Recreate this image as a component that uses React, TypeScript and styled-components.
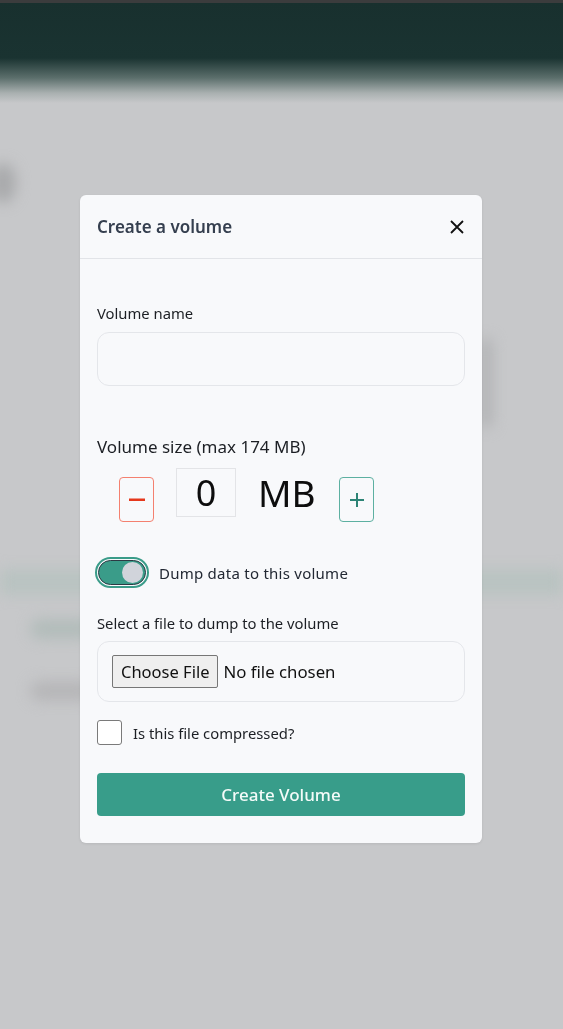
import React from "react";
import styled, { createGlobalStyle } from "styled-components";

const Global = createGlobalStyle`
  html, body { margin: 0; padding: 0; }
  body {
    background: #c7c8ca;
    font-family: "Noto Sans", "Open Sans", sans-serif;
    overflow: hidden;
  }
  * { box-sizing: border-box; }
`;

const Page = styled.div`
  min-height: 100vh;
  background: #c7c8ca;
  position: relative;
  overflow: hidden;
`;

const TopStrip = styled.div`
  height: 3px;
  background: #3b3c3d;
`;

const Header = styled.div`
  height: 100px;
  background: linear-gradient(
    to bottom,
    #18302e 0px,
    #1a3331 55px,
    #5c6f6c 75px,
    #a9b0b0 90px,
    #c7c8ca 100px
  );
`;

const Blurred = styled.div`
  filter: blur(7px);
  display: flex;
  flex-direction: column;
`;

const LeftBlob = styled.div`
  width: 26px;
  height: 40px;
  margin: 60px 0 0 -10px;
  border-radius: 50%;
  background: #a9aaac;
`;

const CardShadowRow = styled.div`
  display: flex;
  justify-content: flex-end;
  margin-top: 135px;
  padding-right: 70px;
`;

const CardEdge = styled.div`
  width: 14px;
  height: 90px;
  background: #b3b4b6;
  border-radius: 10px;
`;

const Band = styled.div`
  margin-top: 141px;
  height: 26px;
  background: #b9c3c1;
`;

const FakeRow = styled.div<{ $mt: number }>`
  display: flex;
  padding-left: 30px;
  margin-top: ${(p) => p.$mt}px;
`;

const Pill = styled.div<{ $c: string }>`
  width: 64px;
  height: 20px;
  border-radius: 10px;
  background: ${(p) => p.$c};
`;

const Overlay = styled.div`
  position: fixed;
  inset: 0;
  display: flex;
  justify-content: center;
  align-items: flex-start;
  padding-top: 195px;
  padding-right: 1px;
`;

const Modal = styled.div`
  width: 402px;
  background: #f8f9fb;
  border-radius: 6px;
  box-shadow: 0 1px 3px rgba(0, 0, 0, 0.08);
  overflow: hidden;
`;

const ModalHeader = styled.div`
  height: 64px;
  display: flex;
  align-items: center;
  justify-content: space-between;
  padding: 0 17px;
  border-bottom: 1px solid #e2e4e8;
`;

const Title = styled.h2`
  margin: 0;
  font-size: 17px;
  font-weight: 600;
  color: #353f4f;
`;

const CloseBtn = styled.button`
  border: none;
  background: none;
  padding: 0;
  width: 16px;
  height: 16px;
  display: flex;
  align-items: center;
  justify-content: center;
  cursor: pointer;
`;

const Body = styled.div`
  padding: 44px 17px 27px;
  display: flex;
  flex-direction: column;
`;

const Label = styled.label`
  font-size: 14.8px;
  color: #1c1f24;
  line-height: 20px;
`;

const TextInput = styled.input`
  margin-top: 9px;
  height: 54px;
  width: 100%;
  border: 1px solid #e4e6ea;
  border-radius: 12px;
  background: #f8f9fb;
  outline: none;
`;

const SizeLabel = styled.div`
  margin-top: 50px;
  font-size: 17px;
  color: #1c1f24;
  line-height: 22px;
`;

const SizeRow = styled.div`
  display: flex;
  align-items: flex-start;
  margin-top: 10px;
  padding-left: 22px;
`;

const StepBtn = styled.button<{ $kind: "minus" | "plus" }>`
  margin-top: 9px;
  width: 35px;
  height: 45px;
  border-radius: 4px;
  background: transparent;
  border: 1px solid ${(p) => (p.$kind === "minus" ? "#f4806f" : "#5db0a1")};
  display: flex;
  align-items: center;
  justify-content: center;
  padding: 0;
`;

const NumberBox = styled.div`
  margin-left: 22px;
  width: 60px;
  height: 49px;
  border: 1px solid #e3e4e7;
  display: flex;
  align-items: center;
  justify-content: center;
  font-size: 36px;
  color: #0d0d0d;
  font-family: "Noto Sans", sans-serif;
`;

const Unit = styled.div`
  margin-left: 22px;
  width: 61px;
  height: 49px;
  display: flex;
  align-items: center;
  font-size: 37px;
  color: #0d0d0d;
  font-family: "Noto Sans", sans-serif;
  margin-right: 20px;
`;

const ToggleRow = styled.div`
  margin-top: 35px;
  margin-left: -2px;
  display: flex;
  align-items: center;
  gap: 10px;
`;

const Toggle = styled.div`
  width: 54px;
  height: 31px;
  border-radius: 16px;
  border: 2px solid #3a9c89;
  padding: 1px;
  background: #f8f9fb;
`;

const Track = styled.div`
  width: 100%;
  height: 100%;
  border-radius: 13px;
  background: #3a9c89;
  border: 1.5px solid #2c3a44;
  display: flex;
  align-items: center;
  justify-content: flex-end;
  padding-right: 2px;
`;

const Thumb = styled.div`
  width: 21px;
  height: 21px;
  border-radius: 50%;
  background: #d1d4db;
`;

const ToggleText = styled.span`
  font-size: 15px;
  color: #222833;
  letter-spacing: 0.25px;
`;

const FileLabel = styled(Label)`
  margin-top: 25px;
`;

const FileBox = styled.div`
  margin-top: 8px;
  height: 61px;
  border: 1px solid #e4e6ea;
  border-radius: 12px;
  display: flex;
  align-items: center;
  padding-left: 14px;
  gap: 5px;
`;

const ChooseBtn = styled.button`
  height: 33px;
  padding: 0 8px;
  background: #efefef;
  border: 1px solid #767676;
  border-radius: 2px;
  font-size: 16.5px;
  color: #111;
  font-family: "Noto Sans", sans-serif;
`;

const NoFile = styled.span`
  font-size: 16.8px;
  color: #111;
`;

const CheckRow = styled.label`
  margin-top: 18px;
  display: flex;
  align-items: center;
  gap: 11px;
  font-size: 14.8px;
  color: #1c1f24;
`;

const CheckBox = styled.span`
  width: 25px;
  height: 25px;
  border: 1px solid #7a7a7a;
  border-radius: 3px;
  background: #fff;
`;

const Submit = styled.button`
  margin-top: 28px;
  height: 43px;
  width: 100%;
  background: #389d8a;
  color: #f4fbf9;
  border: none;
  border-radius: 4px;
  font-size: 17px;
  font-weight: 500;
  font-family: "Noto Sans", sans-serif;
`;

export default function App() {
  return (
    <>
      <Global />
      <Page>
        <TopStrip />
        <Header />
        <Blurred>
          <LeftBlob />
          <CardShadowRow>
            <CardEdge />
          </CardShadowRow>
          <Band />
          <FakeRow $mt={24}>
            <Pill $c="#b2bcba" />
          </FakeRow>
          <FakeRow $mt={42}>
            <Pill $c="#b6b6b8" />
          </FakeRow>
        </Blurred>
        <Overlay>
          <Modal>
            <ModalHeader>
              <Title>Create a volume</Title>
              <CloseBtn aria-label="Close">
                <svg width="14" height="14" viewBox="0 0 14 14">
                  <path d="M1 1 L13 13 M13 1 L1 13" stroke="#111" strokeWidth="1.8" />
                </svg>
              </CloseBtn>
            </ModalHeader>
            <Body>
              <Label>Volume name</Label>
              <TextInput />
              <SizeLabel>Volume size (max 174 MB)</SizeLabel>
              <SizeRow>
                <StepBtn $kind="minus" aria-label="Decrease">
                  <svg width="16" height="4" viewBox="0 0 16 4">
                    <rect x="0" y="0.5" width="16" height="2.5" fill="#e5381c" />
                  </svg>
                </StepBtn>
                <NumberBox>0</NumberBox>
                <Unit>MB</Unit>
                <StepBtn $kind="plus" aria-label="Increase">
                  <svg width="16" height="16" viewBox="0 0 16 16">
                    <path d="M8 1 V15 M1 8 H15" stroke="#2d8475" strokeWidth="2" />
                  </svg>
                </StepBtn>
              </SizeRow>
              <ToggleRow>
                <Toggle>
                  <Track>
                    <Thumb />
                  </Track>
                </Toggle>
                <ToggleText>Dump data to this volume</ToggleText>
              </ToggleRow>
              <FileLabel>Select a file to dump to the volume</FileLabel>
              <FileBox>
                <ChooseBtn>Choose File</ChooseBtn>
                <NoFile>No file chosen</NoFile>
              </FileBox>
              <CheckRow>
                <CheckBox />
                Is this file compressed?
              </CheckRow>
              <Submit>Create Volume</Submit>
            </Body>
          </Modal>
        </Overlay>
      </Page>
    </>
  );
}
